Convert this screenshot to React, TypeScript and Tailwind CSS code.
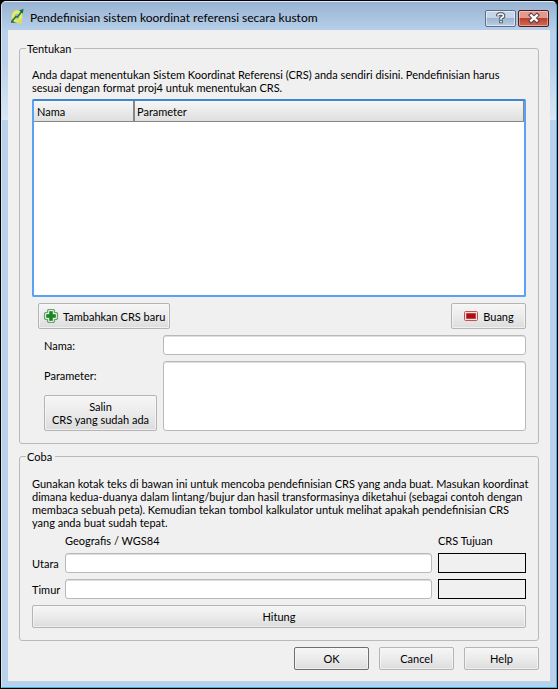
import type { ButtonHTMLAttributes } from 'react';

const buttonLook =
  'rounded-[2px] border bg-linear-to-b from-[#f6f6f6] via-[#ebebeb] to-[#dcdcdc] shadow-[inset_0_0_0_1px_#f8f8f8b0] text-center';
const fieldLook =
  'block w-full min-w-0 rounded-[3px] border border-[#b9b9b9] bg-white px-1 shadow-[inset_0_1px_0_#dedede] outline-none';

function Button({ className = '', ...rest }: ButtonHTMLAttributes<HTMLButtonElement>) {
  return <button type="button" className={`${buttonLook} ${className}`} {...rest} />;
}

function AppIcon() {
  return (
    <svg className="shrink-0" width="16" height="16" viewBox="0 0 16 16" aria-hidden="true">
      <path d="M1 14h6" stroke="#333" strokeWidth="1.2" />
      <ellipse cx="7" cy="8.500" rx="3.8" ry="4.6" fill="none" stroke="#e6ec5c" strokeWidth="3.2" />
      <path d="M8 11.5l3.500 3.800" stroke="#dbe24c" strokeWidth="2.8" />
      <path d="M1.5 13.8L6 8.5l1.5.5L12 3" fill="none" stroke="#1d7a3c" strokeWidth="1.6" />
      <path d="M9.2 2.4L13.5 .8l-.6 4.6z" fill="#17703a" />
    </svg>
  );
}

function AddIcon() {
  return (
    <svg className="shrink-0" width="16" height="16" viewBox="0 0 16 16" aria-hidden="true">
      <path
        d="M5.5 1.500h5l1 1v2h2l1 1v5l-1 1h-2v2l-1 1h-5l-1-1v-2h-2l-1-1v-5l1-1h2v-2z"
        fill="#e4f0e4"
        stroke="#6f9f77"
        strokeWidth="1.2"
        strokeLinejoin="round"
      />
      <path d="M6.500 3.500h3v3h3v3h-3v3h-3v-3h-3v-3h3z" fill="#15891d" stroke="#15891d" strokeWidth=".6" />
    </svg>
  );
}

function RemoveIcon() {
  return (
    <svg className="shrink-0" width="16" height="16" viewBox="0 0 16 16" aria-hidden="true">
      <rect x="1.500" y="3.500" width="13" height="9" rx="1" fill="#f6dede" stroke="#bd5555" />
      <rect x="3" y="5" width="10" height="6" fill="#c98080" />
      <rect x="3.500" y="5.500" width="9" height="5" fill="#b00d12" />
    </svg>
  );
}

function TitleBar() {
  return (
    <header className="flex h-[28px] items-center pr-[1px] pl-[2px]">
      <AppIcon />
      <h1 className="flex-1 pt-1 pl-1 text-[12px] leading-4">Pendefinisian sistem koordinat referensi secara kustom</h1>
      <div className="flex gap-[2px] pt-1">
        <button
          type="button"
          aria-label="Bantuan"
          className="flex h-[17px] w-[31px] items-center justify-center rounded-[2px] border border-[#5b6f87] bg-linear-to-b from-[#c6d6e8] from-45% via-[#9eb5d0] via-50% to-[#bacfe6] shadow-[inset_0_0_0_1px_#ffffff80]"
        >
          <svg width="12" height="12" viewBox="0 0 12 12" aria-hidden="true">
            <path d="M3 4.300V3l1.400-1h2.800l1.200 1v1.500L6 6.200v1.300M6 8.300v2.900" fill="none" stroke="#474f5d" strokeWidth="3.6" />
            <path d="M3 3.800V3l1.400-1h2.800l1.200 1v1.500L6 6.200v1.300M6 9v1.600" fill="none" stroke="#fff" strokeWidth="1.6" />
          </svg>
        </button>
        <button
          type="button"
          aria-label="Tutup"
          className="flex h-[17px] w-[31px] items-center justify-center rounded-[2px] border border-[#551b22] bg-linear-to-b from-[#e09a8e] from-45% via-[#bd3f2c] via-50% to-[#cf6c54] shadow-[inset_0_0_0_1px_#ffffff60]"
        >
          <svg width="12" height="12" viewBox="0 0 12 12" aria-hidden="true">
            <path d="M1.500 1.800l9 8.400M10.500 1.800l-9 8.400" stroke="#53404a" strokeWidth="4.2" />
            <path d="M2.300 2.600l7.400 6.800M9.700 2.600l-7.400 6.800" stroke="#fff" strokeWidth="2.2" />
          </svg>
        </button>
      </div>
    </header>
  );
}

function DefineGroup() {
  return (
    <fieldset className="rounded-[3px] border border-[#b9b9b9] px-3 pb-3">
      <legend className="-ml-[6px] pr-[3px] pl-px">Tentukan</legend>
      <p className="-mr-1 pt-[13px]">
        Anda dapat menentukan Sistem Koordinat Referensi (CRS) anda sendiri disini. Pendefinisian harus sesuai dengan
        format proj4 untuk menentukan CRS.
      </p>
      <div className="mt-[5px] h-[198px] rounded-[2px] border-2 border-[#5aa2f2] border-t-[#3c86d4] bg-white">
        <table className="w-full table-fixed border-separate border-spacing-0 text-left">
          <thead>
            <tr className="h-[21px] bg-linear-to-b from-[#f6f6f6] to-[#dedede]">
              <th className="w-[101px] border-r-2 border-b border-[#868686] px-[3px] font-normal">Nama</th>
              <th className="border-r border-b border-[#868686] px-[2px] font-normal">Parameter</th>
            </tr>
          </thead>
          <tbody />
        </table>
      </div>
      <div className="mt-[6px] flex justify-between pl-[6px]">
        <Button className="flex h-[26px] w-[132px] items-center gap-1 border-[#b4b4b4] pl-1 whitespace-nowrap">
          <AddIcon />
          Tambahkan CRS baru
        </Button>
        <Button className="flex h-[26px] w-[75px] items-center justify-center gap-1 border-[#b4b4b4]">
          <RemoveIcon />
          Buang
        </Button>
      </div>
      <div className="mt-[6px] grid grid-cols-[113px_1fr] gap-[6px] pl-3">
        <label htmlFor="crs-name" className="self-center">
          Nama:
        </label>
        <input id="crs-name" type="text" className={`${fieldLook} h-[20px]`} />
        <div className="flex flex-col justify-between">
          <label htmlFor="crs-parameter" className="pt-2">
            Parameter:
          </label>
          <Button className="h-[36px] border-[#b4b4b4] whitespace-nowrap">
            Salin
            <br />
            CRS yang sudah ada
          </Button>
        </div>
        <textarea id="crs-parameter" className={`${fieldLook} h-[70px] resize-none`} />
      </div>
    </fieldset>
  );
}

function TestRow({ id, label }: { id: string; label: string }) {
  return (
    <>
      <label htmlFor={id} className="self-center">
        {label}
      </label>
      <input id={id} type="text" className={`${fieldLook} h-[20px]`} />
      <output htmlFor={id} className="block h-[20px] border border-black" />
    </>
  );
}

function TestGroup() {
  return (
    <fieldset className="mt-[6px] rounded-[3px] border border-[#b9b9b9] px-3 pb-3">
      <legend className="-ml-[6px] pr-[3px] pl-px">Coba</legend>
      <p className="-mr-1 pt-[14px]">
        Gunakan kotak teks di bawan ini untuk mencoba pendefinisian CRS yang anda buat. Masukan koordinat dimana
        kedua-duanya dalam lintang/bujur dan hasil transformasinya diketahui (sebagai contoh dengan membaca sebuah
        peta). Kemudian tekan tombol kalkulator untuk melihat apakah pendefinisian CRS yang anda buat sudah tepat.
      </p>
      <div className="mt-[5px] grid grid-cols-[27px_1fr_88px] gap-[6px]">
        <span className="col-start-2">Geografis / WGS84</span>
        <span>CRS Tujuan</span>
        <TestRow id="north" label="Utara" />
        <TestRow id="east" label="Timur" />
      </div>
      <Button className="mt-[6px] h-[23px] w-full border-[#b4b4b4]">Hitung</Button>
    </fieldset>
  );
}

export default function App() {
  return (
    <div className="bg-black p-px font-[Lato,'Noto_Sans',sans-serif] text-[11px] leading-[13px] text-black">
      <div className="rounded-t-[5px] border border-[#36b8e0] border-t-[#dcebf8] border-l-[#d3e4f5] bg-[linear-gradient(#98b3d2,#b9d1ea_30px,#b9d1ea_60px,#d9e7f6_118px,#b9d1ea_118px)] px-[6px] pb-[6px]">
        <TitleBar />
        <main className="bg-[#f0f0f0] px-[11px] pt-3 pb-[11px]">
          <DefineGroup />
          <TestGroup />
          <div className="mt-[6px] flex justify-end gap-[10px]">
            <Button className="h-[23px] w-[75px] border-[#6e6e6e]">OK</Button>
            <Button className="h-[23px] w-[75px] border-[#b4b4b4]">Cancel</Button>
            <Button className="h-[23px] w-[75px] border-[#b4b4b4]">Help</Button>
          </div>
        </main>
      </div>
    </div>
  );
}
